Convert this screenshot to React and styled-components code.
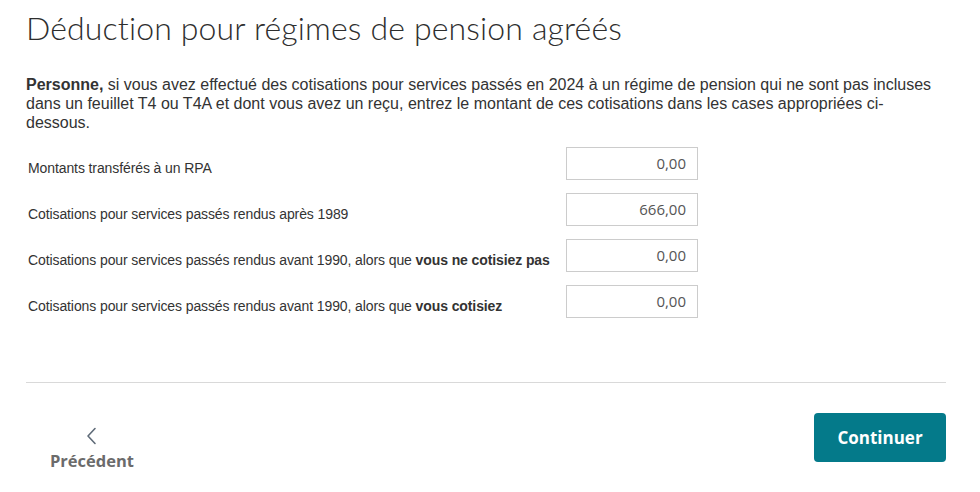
import styled, { createGlobalStyle } from 'styled-components'

const GlobalStyle = createGlobalStyle`
  body {
    margin: 0;
    background: #ffffff;
    font-family: "Liberation Sans", Arial, sans-serif;
  }
`

const fields = [
  { label: 'Montants transférés à un RPA', value: '0,00' },
  { label: 'Cotisations pour services passés rendus après 1989', value: '666,00' },
  { label: 'Cotisations pour services passés rendus avant 1990, alors que ', bold: 'vous ne cotisiez pas', value: '0,00' },
  { label: 'Cotisations pour services passés rendus avant 1990, alors que ', bold: 'vous cotisiez', value: '0,00' },
]

const App = () => {
  return (
    <>
      <GlobalStyle />
      <Page>
        <Title>Déduction pour régimes de pension agréés</Title>
        <Intro>
          <strong>Personne,</strong> si vous avez effectué des cotisations pour services passés en 2024 à un régime de pension qui ne sont pas incluses dans un feuillet T4 ou T4A et dont vous avez un reçu, entrez le montant de ces cotisations dans les cases appropriées ci-dessous.
        </Intro>
        <Fields>
          {fields.map((f, i) => (
            <Row key={i}>
              <Label>
                {f.label}
                {f.bold && <strong>{f.bold}</strong>}
              </Label>
              <Amount type="text" defaultValue={f.value} />
            </Row>
          ))}
        </Fields>
        <Divider />
        <Footer>
          <BackButton>
            <svg width="14" height="18" viewBox="0 0 14 18" fill="none">
              <path d="M10 1.5 L3 9 L10 16.5" stroke="#5f6b78" strokeWidth="1.6" strokeLinecap="round" strokeLinejoin="round" />
            </svg>
            <span>Précédent</span>
          </BackButton>
          <NextButton>Continuer</NextButton>
        </Footer>
      </Page>
    </>
  )
}

const Page = styled.div`
  width: 920px;
  padding: 8px 26px 0 26px;
  color: #333333;
`

const Title = styled.h1`
  margin: 0;
  font-family: Lato, "Open Sans", sans-serif;
  font-weight: 300;
  font-size: 32px;
  line-height: 40px;
  letter-spacing: 0.15px;
  color: #2e2e2e;
`

const Intro = styled.p`
  margin: 27px 0 0 0;
  font-size: 16px;
  line-height: 19px;
  color: #333333;

  strong {
    font-weight: 700;
  }
`

const Fields = styled.div`
  display: flex;
  flex-direction: column;
  gap: 13px;
  margin-top: 15px;
`

const Row = styled.div`
  display: grid;
  grid-template-columns: 540px 132px;
  align-items: center;
  height: 33px;
`

const Label = styled.div`
  padding: 8px 0 0 2px;
  font-size: 14px;
  letter-spacing: -0.1px;
  color: #333333;
  white-space: nowrap;

  strong {
    font-weight: 700;
  }
`

const Amount = styled.input`
  box-sizing: border-box;
  width: 132px;
  height: 33px;
  border: 1px solid #cccccc;
  border-radius: 0;
  padding: 0 11px 2px 8px;
  text-align: right;
  font-family: "Open Sans", sans-serif;
  font-size: 15px;
  color: #555555;
  outline: none;
`

const Divider = styled.hr`
  margin: 64px 0 0 0;
  border: none;
  border-top: 1px solid #d9d9d9;
`

const Footer = styled.div`
  display: flex;
  justify-content: space-between;
  align-items: flex-start;
  padding-top: 30px;
`

const BackButton = styled.button`
  display: flex;
  flex-direction: column;
  align-items: center;
  gap: 4px;
  margin: 14px 0 0 24px;
  padding: 0;
  border: none;
  background: none;
  cursor: pointer;
  font-family: "Open Sans", sans-serif;
  font-weight: 700;
  font-size: 16.5px;
  color: #6b6b6b;
`

const NextButton = styled.button`
  width: 132px;
  height: 49px;
  border: none;
  border-radius: 4px;
  background: #047a8a;
  color: #ffffff;
  font-family: "Open Sans", sans-serif;
  font-weight: 700;
  font-size: 17px;
  cursor: pointer;
`

export default App
